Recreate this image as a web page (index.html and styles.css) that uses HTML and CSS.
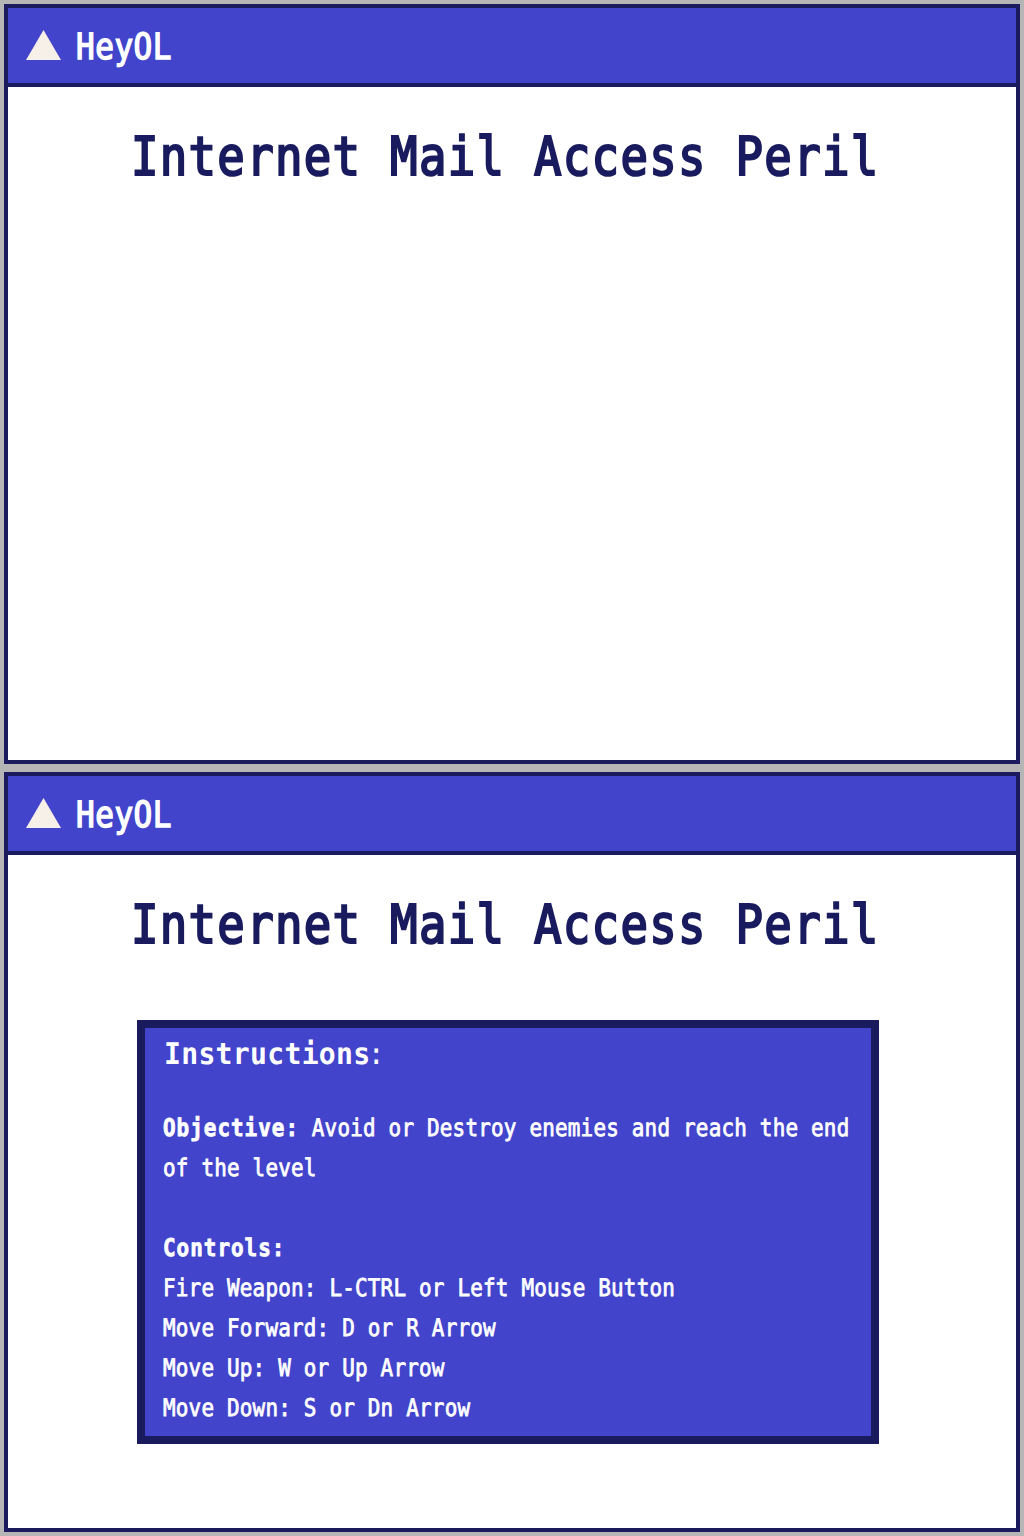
FILE: index.html
```html
<!DOCTYPE html>
<html lang="en">
<head>
<meta charset="utf-8">
<title>HeyOL</title>
<link rel="stylesheet" href="styles.css">
</head>
<body>
<section class="window">
  <header class="bar">
    <svg class="logo" width="35" height="30" viewBox="0 0 35 30"><path d="M17.5 0 35 30H0Z" fill="#f7f0e8"/></svg>
    <span class="brand">HeyOL</span>
  </header>
  <h1 class="title">Internet Mail Access Peril</h1>
</section>
<section class="window">
  <header class="bar">
    <svg class="logo" width="35" height="30" viewBox="0 0 35 30"><path d="M17.5 0 35 30H0Z" fill="#f7f0e8"/></svg>
    <span class="brand">HeyOL</span>
  </header>
  <h1 class="title">Internet Mail Access Peril</h1>
  <div class="panel">
    <h2 class="heading">Instructions<span class="colon">:</span></h2>
    <p class="copy"><b>Objective:</b> Avoid or Destroy enemies and reach the end of the level</p>
    <p class="copy"><b>Controls:</b><br>Fire Weapon: L-CTRL or Left Mouse Button<br>Move Forward: D or R Arrow<br>Move Up: W or Up Arrow<br>Move Down: S or Dn Arrow</p>
  </div>
</section>
</body>
</html>
```

FILE: styles.css
```css
* { box-sizing: border-box; }
body {
  margin: 0;
  padding: 4px;
  height: 1536px;
  display: flex;
  flex-direction: column;
  gap: 8px;
  background: #b5b5b5;
  font-family: "DejaVu Sans Mono", "Liberation Mono", monospace;
  text-rendering: geometricPrecision;
}
.window {
  height: 760px;
  border: 4px solid #191b5e;
  background: #fff;
}
.bar {
  height: 79px;
  padding-left: 18px;
  display: flex;
  align-items: center;
  gap: 15px;
  background: #4244cb;
  border-bottom: 4px solid #191b5e;
  color: #fff;
}
.logo {
  display: block;
  margin-bottom: 1px;
}
.brand {
  padding-top: 5px;
  font-size: 36px;
  line-height: 44px;
  letter-spacing: .6px;
  transform: scaleX(.862);
  transform-origin: left;
  -webkit-text-stroke: 1.5px #fff;
}
.title {
  margin: 42px 0 0 123px;
  font-size: 53.5px;
  line-height: 56px;
  letter-spacing: 1.5px;
  font-weight: 400;
  color: #191b5e;
  white-space: nowrap;
  transform: scaleX(.854);
  transform-origin: left;
  -webkit-text-stroke: 2.2px #191b5e;
}
.panel {
  width: 742px;
  height: 424px;
  margin: 67px 0 0 129px;
  padding: 7px 0 0 18px;
  border: 8px solid #191b5e;
  background: #4244cb;
  color: #fff;
}
.heading {
  margin: 0 0 33px 1px;
  font-size: 30px;
  line-height: 40px;
  letter-spacing: .3px;
  transform: scaleX(.937);
  transform-origin: left;
}
.colon {
  margin-left: -3px;
  font-weight: 400;
}
.copy {
  width: 820px;
  margin: 0 0 40px;
  font-size: 24.3px;
  line-height: 40px;
  letter-spacing: .24px;
  transform: scaleX(.861);
  transform-origin: left;
  -webkit-text-stroke: .8px #fff;
}
.copy b {
  letter-spacing: 1.165px;
}
```
